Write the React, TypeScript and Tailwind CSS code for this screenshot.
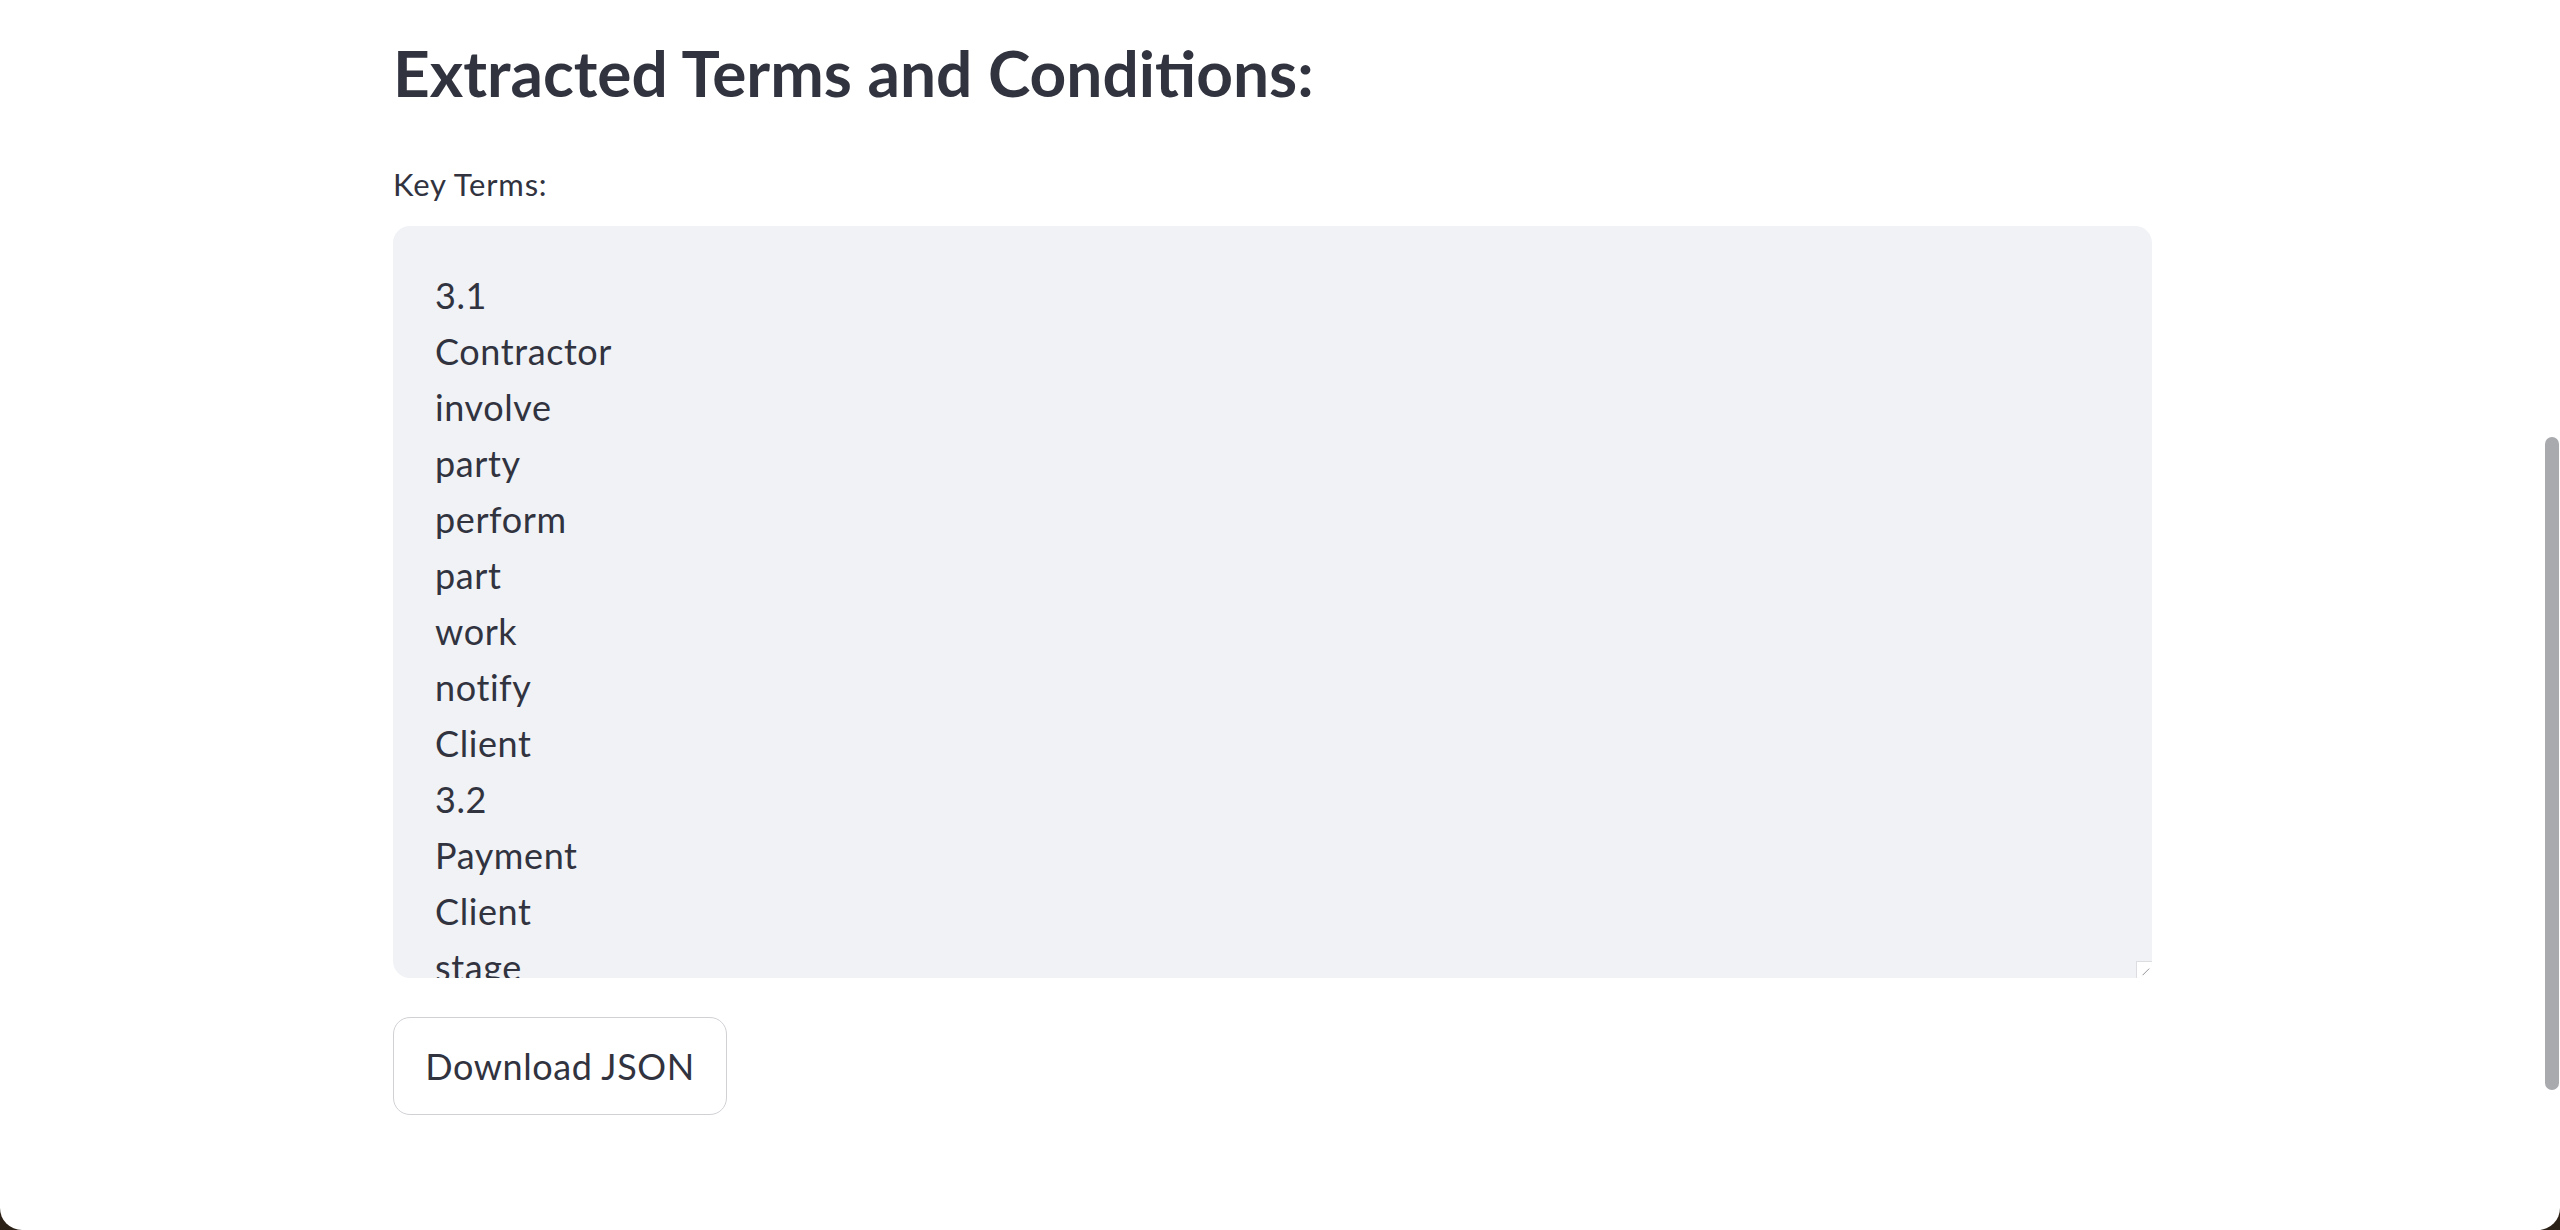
import React from 'react';

const terms = [
  '3.1',
  'Contractor',
  'involve',
  'party',
  'perform',
  'part',
  'work',
  'notify',
  'Client',
  '3.2',
  'Payment',
  'Client',
  'stage',
];

function ResizeGrip() {
  return (
    <div className="absolute bottom-0 right-0 h-[17px] w-[16px] rounded-br-[14px] border-l border-t border-[#dcdde1] bg-white">
      <svg viewBox="0 0 16 17" className="h-full w-full">
        <line x1="6" y1="14" x2="13" y2="7" stroke="#8a8b90" strokeWidth="1" />
      </svg>
    </div>
  );
}

export default function App() {
  return (
    <div className="h-[1230px] w-full bg-[#2b2117]">
      <div
        className="flex h-full w-full overflow-hidden rounded-b-[22px] bg-white text-[#31333f]"
        style={{ fontFamily: 'Lato, "Noto Sans", sans-serif' }}
      >
        <main className="flex-1">
          <div className="mx-auto w-[1759px]">
            <h2 className="mt-[37px] text-[64px] font-bold leading-[72px]">
              Extracted Terms and Conditions:
            </h2>
            <label className="mt-[58px] block text-[31px] leading-[34px] tracking-[0.8px]">Key Terms:</label>
            <div className="relative mt-[25px] h-[752px] overflow-hidden rounded-[17px] bg-[#f0f2f6]">
              <div className="px-[42px] pt-[41px] text-[36px] leading-[56px] tracking-[0.6px]">
                {terms.map((t, i) => (
                  <div key={i}>{t}</div>
                ))}
              </div>
              <ResizeGrip />
            </div>
            <button className="mt-[39px] flex h-[98px] w-[334px] items-center justify-center rounded-[17px] border border-[#d0d1d5] bg-white text-[36px] leading-none tracking-[0.6px]">
              Download JSON
            </button>
          </div>
        </main>
        <div className="w-[15px] pt-[437px]">
          <div className="h-[653px] w-[14px] rounded-full bg-[#a9aaae]" />
        </div>
      </div>
    </div>
  );
}
